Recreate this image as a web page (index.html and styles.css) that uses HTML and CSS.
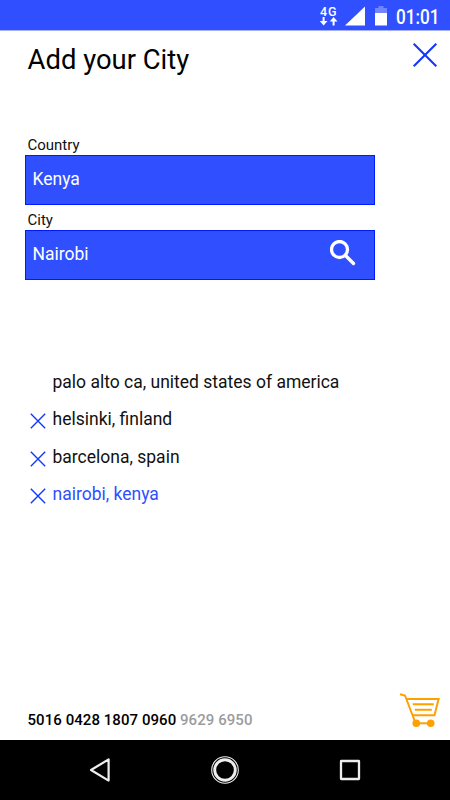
FILE: index.html
```html
<!DOCTYPE html>
<html lang="en">
<head>
<meta charset="utf-8">
<title>Add your City</title>
<link rel="stylesheet" href="styles.css">
</head>
<body>
<div class="screen">
  <div class="status">
    <div class="network">
      <span class="network-type">4G</span>
      <svg width="18" height="9" viewBox="0 0 18 9" fill="#fff"><path d="M2.6 0h2v4h2.9L3.6 8.4-.2 4h2.8zM12.6 8.5h2V4.4h2.9L13.6 0 9.8 4.4h2.8z"/></svg>
    </div>
    <svg class="signal" width="20" height="20" viewBox="0 0 20 20"><path d="M20 .5v19H0z" fill="#fff"/></svg>
    <svg class="battery" width="12" height="20" viewBox="0 0 12 20"><path d="M0 2h3.5V0h5v2H12v5H0z" fill="#7185ff"/><path d="M0 7h12v12.5H0z" fill="#fff"/></svg>
    <span class="clock">01:01</span>
  </div>
  <header class="header">
    <h1 class="title">Add your City</h1>
    <svg class="close" width="26" height="26" viewBox="0 0 26 26"><path d="M1.7 1.7l22.6 22.6M24.3 1.7L1.7 24.3"/></svg>
  </header>
  <main class="main">
    <div class="form">
      <label class="label">Country</label>
      <div class="field"><span class="value">Kenya</span></div>
      <label class="label">City</label>
      <div class="field">
        <span class="value">Nairobi</span>
        <svg class="search" width="26" height="26" viewBox="0 0 26 26"><circle cx="9.5" cy="9.5" r="8"/><path d="M15.5 15.5l8 8"/></svg>
      </div>
    </div>
    <ul class="cities">
      <li class="city"><span class="remove"></span><span class="name">palo alto ca, united states of america</span></li>
      <li class="city"><svg class="remove" viewBox="0 0 16 16"><path d="M.8.8l14.4 14.4M15.2.8L.8 15.2"/></svg><span class="name">helsinki, finland</span></li>
      <li class="city"><svg class="remove" viewBox="0 0 16 16"><path d="M.8.8l14.4 14.4M15.2.8L.8 15.2"/></svg><span class="name">barcelona, spain</span></li>
      <li class="city selected"><svg class="remove" viewBox="0 0 16 16"><path d="M.8.8l14.4 14.4M15.2.8L.8 15.2"/></svg><span class="name">nairobi, kenya</span></li>
    </ul>
  </main>
  <footer class="footer">
    <p class="code">5016 0428 1807 0960 <span class="rest">9629 6950</span></p>
    <svg class="cart" width="42" height="36" viewBox="0 0 42 36"><path d="M1 1.3l5 1.2L16.5 30M7.7 6H39.6l-4.1 16.3H13.8" stroke-width="2"/><path d="M13.7 11.3h21M15.8 16.8h17" stroke-width="2"/><path d="M17.3 30.3h14.4" stroke-width="2"/><circle cx="17.3" cy="30.3" r="3.8"/><circle cx="31.7" cy="30.3" r="3.8"/></svg>
  </footer>
  <nav class="nav">
    <svg width="22" height="26" viewBox="0 0 22 26"><path d="M19.6 2.4v21.2L2 13z" stroke-width="2.2"/></svg>
    <svg width="28" height="28" viewBox="0 0 28 28"><circle cx="14" cy="14" r="13.3" stroke-width="1.1"/><circle cx="14" cy="14" r="10.3" stroke-width="2.9"/></svg>
    <svg width="22" height="22" viewBox="0 0 22 22"><rect x="2" y="2" width="18" height="18" rx=".3" stroke-width="2.3"/></svg>
  </nav>
</div>
</body>
</html>
```

FILE: styles.css
```css
* { box-sizing: border-box; }
body { margin: 0; background: #fff; font-family: Roboto, sans-serif; color: #111; }
svg { display: block; flex: none; }
.screen { width: 450px; height: 800px; display: flex; flex-direction: column; overflow: hidden; }
.status { height: 31px; flex: none; background: #304ffe; border-bottom: 1px solid #a5b1ff; display: flex; padding: 6px 10px 0 0; justify-content: flex-end; color: #fff; }
.network { width: 18px; margin-right: 7px; }
.network svg { overflow: visible; }
.network-type { display: block; font-size: 12.5px; line-height: 12px; font-weight: 500; letter-spacing: .8px; height: 11px; }
.signal { margin-right: 10px; }
.battery { margin-right: 9px; }
.clock { font-size: 19.5px; line-height: 23px; font-weight: 500; width: 44px; white-space: nowrap; transform: scaleX(.88); transform-origin: 0 0; }
.header { height: 105px; flex: none; display: flex; justify-content: space-between; padding: 11px 12px 0 28px; }
.title { margin: 0 0 0 -.4px; font-size: 27.4px; line-height: 36px; font-weight: 400; color: #000; }
.close { stroke: #1238fa; stroke-width: 2.1; fill: none; }
.main { flex: 1; }
.form { width: 350px; margin-left: 25px; }
.label { display: block; height: 19px; padding-left: 2.5px; font-size: 15px; line-height: 18px; color: #111; }
.field { height: 50px; border: 1px solid #001aff; background: #304ffe; display: flex; justify-content: space-between; padding: 8px 18px 0 6.5px; margin-bottom: 6px; color: #fff; }
.value { font-size: 17.5px; line-height: 30px; }
.search { fill: none; stroke: #fff; stroke-width: 3.3; stroke-linecap: round; margin-top: 1px; }
.cities { list-style: none; margin: 83px 0 0; padding: 0 0 0 30px; }
.city { height: 37.5px; display: flex; align-items: center; }
.remove { width: 16px; height: 16px; margin: 4px 6.5px 0 0; fill: none; stroke: #1238fa; stroke-width: 1.4; }
.name { font-size: 17.5px; line-height: 24px; white-space: nowrap; }
.selected { color: #304ffe; }
.footer { height: 47px; flex: none; display: flex; justify-content: space-between; padding: 0 9px 0 27.5px; }
.code { margin: 17px 0 0; font-size: 15px; line-height: 20px; font-weight: 500; color: #000; letter-spacing: .06px; }
.rest { color: #9c9c9c; }
.cart { fill: none; stroke: #ffa000; }
.cart circle { fill: #ffa000; stroke: none; }
.nav { height: 60px; flex: none; background: #000; display: flex; justify-content: space-between; align-items: center; padding: 0 89px; }
.nav svg { fill: none; stroke: #eee; stroke-linejoin: round; }
```
